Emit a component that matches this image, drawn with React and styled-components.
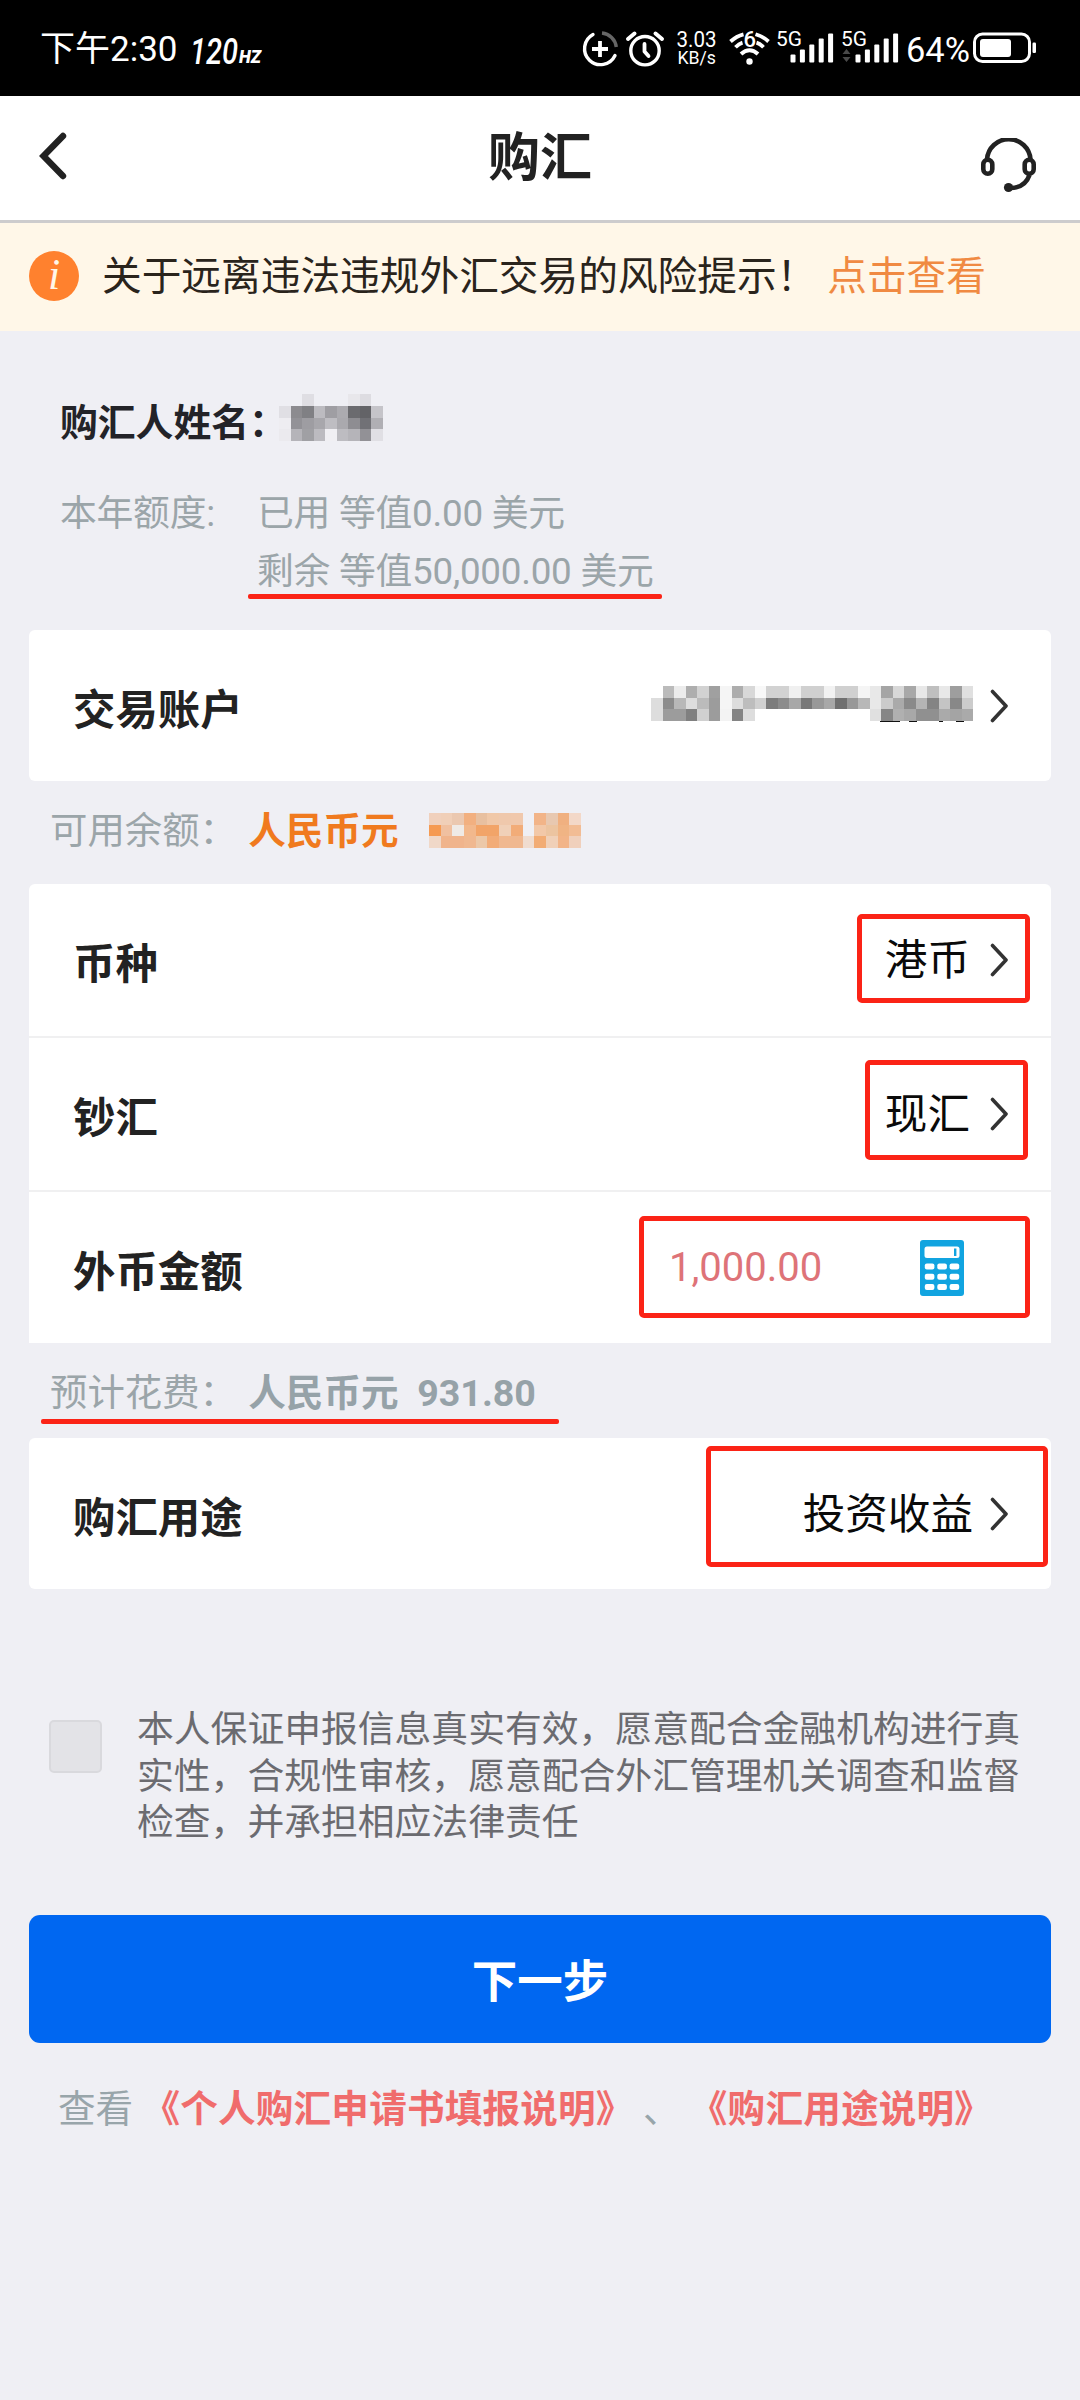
import React from "react";
import styled, { createGlobalStyle } from "styled-components";

const Global = createGlobalStyle`
  * {
    box-sizing: border-box;
  }
  body {
    margin: 0;
    background-color: #efeff4;
    font-family: Roboto, "Noto Sans CJK SC", sans-serif;
  }
`;

const Page = styled.div`
  width: 1080px;
  height: 2400px;
  background-color: #efeff4;
  overflow: hidden;
`;

const StatusBar = styled.div`
  display: flex;
  align-items: center;
  height: 96px;
  padding: 0 44px 0 40px;
  background-color: #000;
  color: #fff;
`;
const Time = styled.div`
  font-size: 35px;
  line-height: 40px;
  padding-top: 4px;
  width: 151px;
  white-space: nowrap;
`;
const StatusIcons = styled.div`
  display: flex;
  margin-left: auto;
`;
const StatusIcon = styled.svg`
  display: block;
  height: 40px;
  width: ${(props) => props.$w}px;
  margin-left: ${(props) => props.$ml || 0}px;
  overflow: visible;
  font-family: Roboto, sans-serif;
`;

const Header = styled.header`
  display: grid;
  grid-template-columns: 120px 1fr 120px;
  align-items: center;
  height: 127px;
  background-color: #fff;
  border-bottom: 3px solid #cdcccd;
`;
const Title = styled.h1`
  margin: 0;
  padding-top: 2px;
  text-align: center;
  font-size: 52px;
  line-height: 60px;
  font-weight: 700;
  color: #222;
`;
const BackIcon = styled.svg`
  margin: 0 0 4px 37px;
`;
const ServiceIcon = styled.svg`
  margin: 16px 0 0 19px;
`;

const Notice = styled.div`
  display: flex;
  align-items: center;
  height: 108px;
  padding: 0 28px 0 29px;
  background-color: #fff7e8;
  font-size: 39.7px;
  line-height: 48px;
  color: #2a241c;
  white-space: pre;
`;
const InfoBadge = styled.div`
  display: flex;
  justify-content: center;
  width: 50px;
  height: 50px;
  margin: 0 23px 2px 0;
  border-radius: 50%;
  background-color: #ff812e;
  color: #fff7e8;
  font: italic 44px/47px "Liberation Serif", serif;
`;
const NoticeLink = styled.span`
  margin-left: 1px;
  color: #f08a42;
`;

const Owner = styled.div`
  display: flex;
  height: 50px;
  margin: 63px 0 0 60px;
  font-size: 37.8px;
  line-height: 58px;
  font-weight: 700;
  color: #232328;
`;
const Quota = styled.div`
  display: flex;
  margin: 41px 0 0 60px;
  height: 145px;
  font-size: 36.8px;
  line-height: 58px;
  letter-spacing: -0.25px;
  color: #9ba5a9;
`;
const QuotaLabel = styled.div`
  width: 197px;
`;
const QuotaLine = styled.div`
  position: relative;
  white-space: nowrap;
`;

const Card = styled.section`
  margin: 0 29px;
  background-color: #fff;
  border-radius: ${(props) => props.$radius || "6px"};
`;
const Row = styled.div`
  position: relative;
  display: flex;
  align-items: center;
  justify-content: space-between;
  height: ${(props) => props.$height || 151}px;
  padding: 0 42px 0 44px;
  & + & {
    border-top: 2px solid #f0f0f1;
  }
`;
const Label = styled.div`
  padding-top: 10px;
  font-size: 42.4px;
  line-height: 60px;
  font-weight: 700;
  color: #222;
`;
const Value = styled.div`
  display: flex;
  align-items: center;
  font-size: 42.6px;
  line-height: 60px;
  color: #0a0a0a;
`;
const Amount = styled.div`
  width: 251px;
  font-size: 40px;
  line-height: 60px;
  color: #de7378;
`;
const AmountField = styled.div`
  display: flex;
  align-items: center;
  margin-right: 45px;
`;
const Arrow = styled.svg`
  margin-left: ${(props) => props.$gap || 17}px;
`;

const Summary = styled.div`
  position: relative;
  display: flex;
  height: ${(props) => props.$height}px;
  padding: 4px 0 0 50px;
  font-size: 37.4px;
  line-height: ${(props) => props.$line}px;
  color: #9ba5a9;
  white-space: pre;
`;
const Strong = styled.span`
  margin-left: 2px;
  font-size: 37.6px;
  font-weight: 700;
  color: ${(props) => props.$color || "#96a2a8"};
`;

/* red pen marks laid over the form */
const Frame = styled.div`
  position: absolute;
  top: ${(props) => props.$top}px;
  right: ${(props) => props.$right}px;
  width: ${(props) => props.$w}px;
  height: ${(props) => props.$h}px;
  border: 5px solid #fb2316;
  border-radius: 5px;
`;
const Underline = styled.div`
  position: absolute;
  left: ${(props) => props.$left}px;
  bottom: ${(props) => props.$bottom}px;
  width: ${(props) => props.$w}px;
  height: 5px;
  border-radius: 2px;
  background-color: #fb2316;
`;

const Agreement = styled.label`
  display: flex;
  margin: 118px 0 0 49px;
`;
const Checkbox = styled.span`
  width: 53px;
  height: 53px;
  margin: 13px 35px 0 0;
  border: 2px solid #d9d9dd;
  border-radius: 5px;
  background-color: #e3e3e7;
`;
const AgreementText = styled.p`
  margin: 0;
  font-size: 36.8px;
  line-height: 46.6px;
  color: #6b6b70;
  white-space: nowrap;
`;
const NextButton = styled.button`
  display: block;
  width: 1022px;
  height: 128px;
  margin: 68px 29px 0;
  padding: 0 0 1px;
  border: 0;
  border-radius: 11px;
  background-color: #0067f1;
  color: #fff;
  font-family: inherit;
  font-size: 45.5px;
  font-weight: 700;
`;
const Footer = styled.div`
  margin: 41px 0 0 58px;
  font-size: 37.6px;
  line-height: 50px;
  color: #98a5aa;
  white-space: pre;
`;
const DocLink = styled.span`
  font-weight: 700;
  letter-spacing: 0.2px;
  color: #f06c6c;
`;

const ownerMask = [
  "- - dfdee3 - - - e8e7eb dddce1 -",
  "e0dfe4 8c8b8f 808084 bcbbc0 9f9ea3 acabb0 6b6b6f 636367 c5c4c9",
  "eeedf1 939297 9e9da2 a8a7ac bebdc2 aaa9ae 8e8d92 717176 b0afb4",
  "ebeaee b5b4b9 a0a0a4 bcbbc0 f0eff3 bdbcc1 b5b4b9 929196 e0dfe4",
];
const accountMask = [
  "- bb ec ae d2 a0 f5 ad d8 f8 d2 d2 f0 d0 d0 f2 d0 d0 f5 e8 a5 d8 a8 e8 bf e8 9e e0",
  "dd 8c b8 dd bb 9c f5 dd bd d0 7c 8c a8 78 98 a8 70 98 b8 e8 cb aa 8a b4 84 c4 88 cc",
  "dd 9c 9c 80 d0 9c f3 84 dd - - - - - - - - - - e0 86 b0 a8 90 90 aa a4 aa",
];
const balanceMask = [
  "f0d0bc f0cfb8 ebc8b0 f2b080 e8c0a0 f0c8a8 efc8ac f0c8ac - f2b488 e8c8b0 f0b080 f3d8c8",
  "f59a52 f0c0a0 efeae6 f2b88c f2a468 f2a468 f0d0b8 f2ac78 - f2c8a8 ecc4a0 f0b484 f2bc94",
  "f0d8c8 f0b48c f0b48c f0b890 ecc8a8 f2ac78 f0b890 f0b890 f0dccf f2ac74 f0d0b8 f2b488 f0d0bc",
];

const Mask = ({ rows, width, height, children }) => {
  const cols = rows[0].split(" ").length;
  const w = width / cols;
  const h = height / rows.length;
  return (
    <svg width={width} height={height} overflow="visible" shapeRendering="crispEdges">
      {rows.map((row, y) =>
        row.split(" ").map((c, x) =>
          c === "-" ? null : (
            <rect
              key={x + "-" + y}
              x={x * w}
              y={y * h}
              width={w}
              height={h}
              fill={"#" + (c.length === 2 ? c + c + c : c)}
            />
          )
        )
      )}
      {children}
    </svg>
  );
};
const OwnerMask = styled.div`
  margin: 0 0 0 -8px;
  line-height: 0;
`;
const AccountMask = styled.div`
  margin: 0 0 4px 0;
  line-height: 0;
`;
const BalanceMask = styled.div`
  margin: 28px 0 0 12px;
  line-height: 0;
`;

const ChevronRight = ({ gap }) => (
  <Arrow $gap={gap} width="19" height="34" viewBox="0 0 19 34">
    <path d="M2.5 2.5 L16 17 L2.5 31.5" fill="none" stroke="#333" strokeWidth="3.6" strokeLinecap="round" strokeLinejoin="round" />
  </Arrow>
);

const Signal = ({ ml, data }) => (
  <StatusIcon $w={56} $ml={ml} viewBox="0 0 56 40" fill="#fff">
    <text x="-1" y="17.5" fontSize="20.5" textLength="26" lengthAdjust="spacingAndGlyphs">5G</text>
    {[8, 13, 18, 24, 29].map((h, i) => (
      <rect key={i} x={13.5 + i * 9.4} y={34.5 - h} width="5" height={h} rx="1" />
    ))}
    {data && <path d="M0.5 26 L4.5 21 L8.5 26Z M0.5 29 L4.5 34 L8.5 29Z" fill="#4a4a4a" />}
  </StatusIcon>
);

const Calculator = () => (
  <svg width="44" height="56" viewBox="0 0 44 56">
    <rect width="44" height="56" rx="3" fill="#11a4e0" />
    <rect x="4.5" y="6.5" width="35" height="11.5" rx="2.5" fill="#fff" />
    <rect x="34" y="8.5" width="2.4" height="7.5" fill="#11a4e0" />
    {[23.5, 33.8, 44].map((y) =>
      [4.8, 17.3, 29.6].map((x) => (
        <rect key={x + y * 100} x={x} y={y} width="9.6" height="6" rx="2" fill="#fff" />
      ))
    )}
  </svg>
);

const App = () => (
  <Page>
    <Global />
    <StatusBar>
      <Time>下午2:30</Time>
      <StatusIcon $w={70} viewBox="0 0 70 40" fill="#fff" fontStyle="italic">
        <text x="-1" y="35.5" fontSize="36" fontWeight="500" textLength="48" lengthAdjust="spacingAndGlyphs">120</text>
        <text x="48" y="34.5" fontSize="19" fontWeight="900" textLength="22" lengthAdjust="spacingAndGlyphs">HZ</text>
      </StatusIcon>
      <StatusIcons>
        <StatusIcon $w={36} viewBox="0 0 36 40" fill="none" stroke="#fff" strokeWidth="3.4" strokeLinecap="round">
          <path d="M11 6.5 A16 16 0 1 0 33 27.5" />
          <path d="M20 5 A16 16 0 0 1 34.3 19" stroke="#666" strokeLinecap="butt" />
          <path d="M18 13 V29 M10 21 H26" strokeWidth="3.8" strokeLinecap="butt" />
        </StatusIcon>
        <StatusIcon $w={38} $ml={8} viewBox="0 0 38 40" fill="none" stroke="#fff" strokeWidth="3.4" strokeLinecap="round">
          <circle cx="19" cy="22.7" r="14.2" />
          <path d="M2 11 L8.5 5.5 M36 11 L29.5 5.5" strokeWidth="4" />
          <path d="M18.5 16 V23.5 L22.5 28" strokeWidth="3.8" strokeLinejoin="round" />
        </StatusIcon>
        <StatusIcon $w={39} $ml={13} viewBox="0 0 39 40" fill="#fff">
          <text x="-0.5" y="19.3" fontSize="21.5" textLength="40" lengthAdjust="spacingAndGlyphs">3.03</text>
          <text x="0.5" y="36" fontSize="18.5" textLength="38.5" lengthAdjust="spacingAndGlyphs">KB/s</text>
        </StatusIcon>
        <StatusIcon $w={41} $ml={13} viewBox="0 0 41 40" fill="none" stroke="#fff" strokeWidth="3.8">
          <path d="M1.5 13.5 Q7.5 8 14.5 6.3 M39.5 13.5 Q34.5 8.8 26.5 6.3" />
          <path d="M6.5 19.3 Q10 15.6 13.5 14.6 M34.5 19.3 Q31 15.6 27.5 14.6" />
          <path d="M12 26 Q20.5 18.5 29 26" strokeWidth="4" />
          <circle cx="20.5" cy="33.5" r="3.2" fill="#fff" stroke="none" />
          <text x="14.5" y="18.5" fontSize="22" fontWeight="500" fill="#fff" stroke="none">6</text>
        </StatusIcon>
        <Signal ml={7} />
        <Signal ml={9} data />
        <StatusIcon $w={62} $ml={9} viewBox="0 0 62 40" fill="#fff">
          <text x="-1" y="34" fontSize="34.5" textLength="64" lengthAdjust="spacingAndGlyphs">64%</text>
        </StatusIcon>
        <StatusIcon $w={63} $ml={4} viewBox="0 0 63 40">
          <rect x="1.5" y="6" width="55" height="27.5" rx="8" fill="none" stroke="#fff" strokeWidth="3" />
          <rect x="7" y="11" width="31" height="18" rx="3" fill="#fff" />
          <rect x="59.5" y="14.5" width="3.5" height="10.5" rx="1.2" fill="#fff" />
        </StatusIcon>
      </StatusIcons>
    </StatusBar>

    <Header>
      <BackIcon width="32" height="50" viewBox="0 0 32 50">
        <path d="M26 5 L6.5 25 L26 45" fill="none" stroke="#222" strokeWidth="6.4" strokeLinecap="round" />
      </BackIcon>
      <Title>购汇</Title>
      <ServiceIcon width="60" height="56" viewBox="0 0 60 56" fill="none" stroke="#222" strokeWidth="4.6">
        <path d="M8 21.5 A21.8 21.8 0 0 1 51.5 21.5" />
        <rect x="4.3" y="21.8" width="9" height="14" rx="4.5" />
        <rect x="45.7" y="21.8" width="9" height="14" rx="4.5" />
        <path d="M50.5 37 Q46 50 31 50" />
        <circle cx="29.5" cy="49.5" r="4.6" fill="#222" stroke="none" />
      </ServiceIcon>
    </Header>

    <Notice>
      <InfoBadge>i</InfoBadge>
      <span>关于远离违法违规外汇交易的风险提示！ </span>
      <NoticeLink>点击查看</NoticeLink>
    </Notice>

    <Owner>
      <span>购汇人姓名：</span>
      <OwnerMask>
        <Mask rows={ownerMask} width={104} height={47} />
      </OwnerMask>
    </Owner>
    <Quota>
      <QuotaLabel>本年额度:</QuotaLabel>
      <div>
        <QuotaLine>已用 等值0.00 美元</QuotaLine>
        <QuotaLine>
          剩余 等值50,000.00 美元
          <Underline $left={-9} $bottom={2} $w={414} />
        </QuotaLine>
      </div>
    </Quota>

    <Card>
      <Row>
        <Label>交易账户</Label>
        <Value>
          <AccountMask>
            <Mask rows={accountMask} width={322} height={35}>
              <path d="M229 35.5 H249 M258 35.5 H266 M288 35.5 H292 M305 35.5 H313" stroke="#111" />
            </Mask>
          </AccountMask>
          <ChevronRight />
        </Value>
      </Row>
    </Card>

    <Summary $height={103} $line={92}>
      <span>可用余额： </span>
      <Strong $color="#f07a1e">人民币元  </Strong>
      <BalanceMask>
        <Mask rows={balanceMask} width={152} height={35} />
      </BalanceMask>
    </Summary>

    <Card $radius="6px 6px 0 0">
      <Row $height={152}>
        <Label>币种</Label>
        <Value>
          港币
          <ChevronRight gap={20} />
        </Value>
        <Frame $top={30} $right={21} $w={173} $h={89} />
      </Row>
      <Row $height={154}>
        <Label>钞汇</Label>
        <Value>
          现汇
          <ChevronRight gap={20} />
        </Value>
        <Frame $top={22} $right={23} $w={163} $h={100} />
      </Row>
      <Row $height={153}>
        <Label>外币金额</Label>
        <AmountField>
          <Amount>1,000.00</Amount>
          <Calculator />
        </AmountField>
        <Frame $top={24} $right={21} $w={391} $h={102} />
      </Row>
    </Card>

    <Summary $height={95} $line={92}>
      <span>预计花费： </span>
      <Strong>人民币元  931.80</Strong>
      <Underline $left={41} $bottom={14} $w={518} />
    </Summary>

    <Card>
      <Row>
        <Label>购汇用途</Label>
        <Value>
          投资收益
          <ChevronRight />
        </Value>
        <Frame $top={8} $right={3} $w={342} $h={121} />
      </Row>
    </Card>

    <Agreement>
      <Checkbox />
      <AgreementText>
        本人保证申报信息真实有效，愿意配合金融机构进行真
        <br />
        实性，合规性审核，愿意配合外汇管理机关调查和监督
        <br />
        检查，并承担相应法律责任
      </AgreementText>
    </Agreement>
    <NextButton>下一步</NextButton>
    <Footer>
      查看 <DocLink>《个人购汇申请书填报说明》</DocLink> 、 <DocLink>《购汇用途说明》</DocLink>
    </Footer>
  </Page>
);

export default App;
